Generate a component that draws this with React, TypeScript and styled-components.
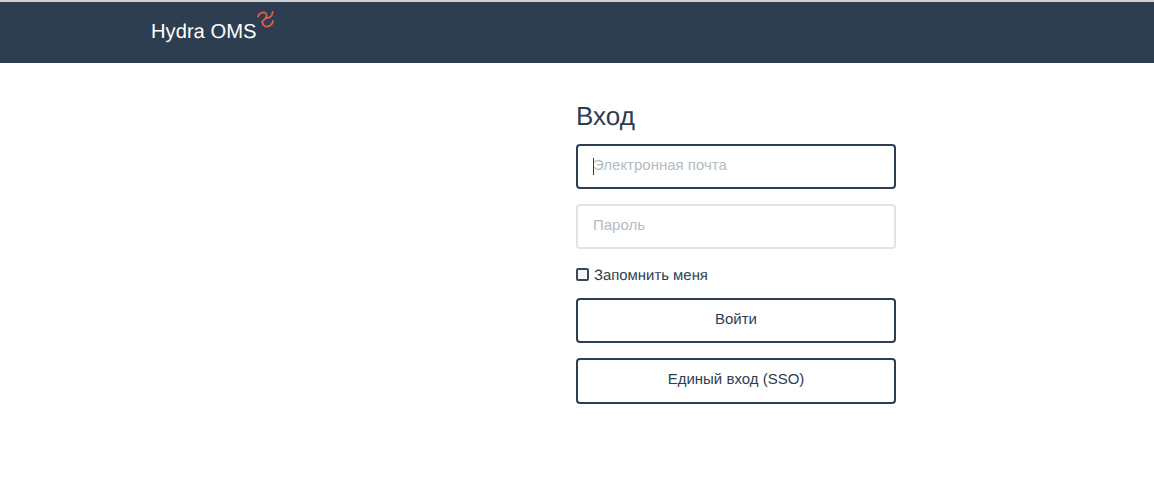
import { FC } from 'react';
import styled, { createGlobalStyle } from 'styled-components';

const GlobalStyle = createGlobalStyle`
    html, body {
        margin: 0;
        padding: 0;
        background: #fff;
        font-family: "Liberation Sans", Arial, sans-serif;
        color: #2c3e50;
        text-rendering: geometricPrecision;
    }
`;

const Page = styled('div')`
    min-height: 481px;
    border-top: 2px solid #d0d0d0;
    box-sizing: border-box;
`;

const Navbar = styled('header')`
    height: 61px;
    background: #2c3e50;
    display: flex;
    align-items: center;
    padding-left: 151px;
`;

const Brand = styled('a')`
    display: flex;
    align-items: flex-start;
    color: #fff;
    font-size: 20.2px;
    line-height: 24px;
    margin-top: -2px;
`;

const BrandMark = styled('svg')`
    width: 17px;
    height: 17px;
    margin-top: -9px;
    margin-left: 1px;
    fill: none;
    stroke: #e2604c;
    stroke-width: 1.8;
    stroke-linecap: round;
    stroke-linejoin: round;
`;

const Main = styled('main')`
    padding: 38px 0 0 576px;
`;

const Form = styled('form')`
    width: 320px;
    display: flex;
    flex-direction: column;
`;

const Title = styled('h1')`
    margin: 0 0 12px;
    font-size: 26px;
    font-weight: 400;
    line-height: 31px;
    color: #2c3e50;
`;

const Field = styled('div')`
    position: relative;
    margin-bottom: 15px;
`;

const Input = styled('input')<{ $focused?: boolean }>`
    display: block;
    width: 100%;
    height: 45px;
    box-sizing: border-box;
    padding: 0 15px 4px;
    border: 2px solid ${props => props.$focused ? '#2c3e50' : '#dce4ec'};
    border-radius: 4px;
    outline: none;
    background: #fff;
    font-family: inherit;
    font-size: 15px;
    color: #2c3e50;

    &::placeholder {
        color: #b4bcc2;
        opacity: 1;
    }
`;

const Caret = styled('span')`
    position: absolute;
    left: 17px;
    top: 14px;
    width: 1px;
    height: 17px;
    background: #2c3e50;
`;

const Remember = styled('label')`
    display: flex;
    align-items: flex-start;
    gap: 5px;
    height: 20px;
    margin: 2px 0 12px;
    font-size: 14.9px;
    line-height: 20px;
    color: #2c3e50;
`;

const Box = styled('input')`
    appearance: none;
    width: 13px;
    height: 13px;
    margin: 2px 0 0;
    box-sizing: border-box;
    border: 2px solid #3a4a5c;
    border-radius: 2px;
    background: #f7f7f7;
`;

const Button = styled('button')<{ $tall?: boolean }>`
    display: block;
    width: 100%;
    height: ${props => props.$tall ? '46px' : '45px'};
    margin-bottom: 15px;
    box-sizing: border-box;
    border: 2px solid #2c3e50;
    border-radius: 4px;
    background: #fff;
    font-family: inherit;
    font-size: 15px;
    color: #2c3e50;
    padding: 0 0 ${props => props.$tall ? '6px' : '4px'};
`;

const App: FC = () => (
    <Page>
        <GlobalStyle />
        <Navbar>
            <Brand>
                Hydra OMS
                <BrandMark viewBox="0 0 17 17">
                    <path d="M1 5.5C2 2.5 5 1 7.5 1.5 10.5 2.5 10 6 8 8 7 9 6 9.5 5.5 10.5 5 13 7 15.7 10 15.7 13 15.7 15.5 13 16 10" />
                    <path d="M9.5 6.8C12 7.2 15.2 6 15.7 1" />
                </BrandMark>
            </Brand>
        </Navbar>
        <Main>
            <Form>
                <Title>Вход</Title>
                <Field>
                    <Input $focused placeholder="Электронная почта" />
                    <Caret />
                </Field>
                <Field>
                    <Input type="password" placeholder="Пароль" />
                </Field>
                <Remember>
                    <Box type="checkbox" />
                    Запомнить меня
                </Remember>
                <Button type="button">Войти</Button>
                <Button type="button" $tall>Единый вход (SSO)</Button>
            </Form>
        </Main>
    </Page>
);

export default App;
